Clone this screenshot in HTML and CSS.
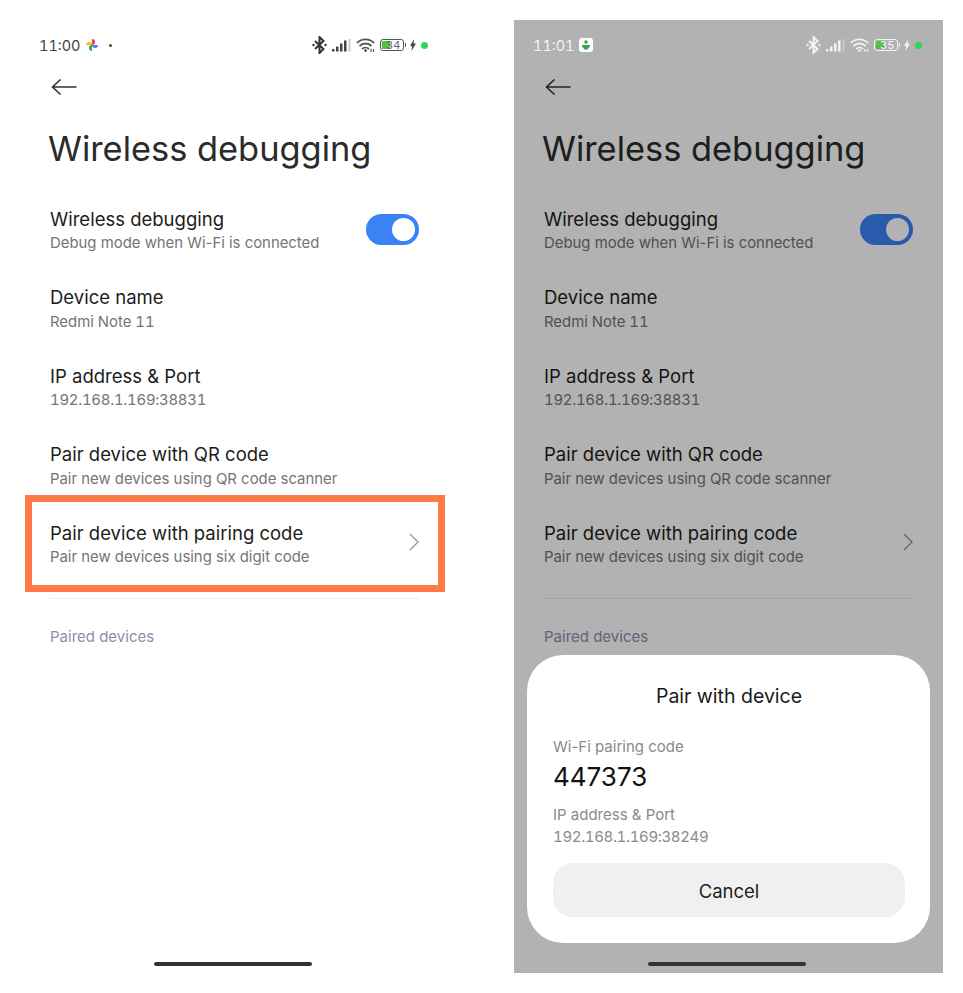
FILE: index.html
```html
<!DOCTYPE html>
<html lang="en">
<head>
  <meta charset="UTF-8">
  <meta name="viewport" content="width=device-width, initial-scale=1.0">
  <title>Wireless debugging</title>
  <link rel="stylesheet" href="styles.css">
</head>
<body>
  <div class="screens">

    <!-- left phone -->
    <div class="phone">
      <div class="status">
        <span class="time">11:00</span>
        <svg class="notif" width="14" height="14" viewBox="0 0 14 14">
          <path d="M7 7V1a3 3 0 0 1 0 6z" fill="#ea4335"/>
          <path d="M7 7h6a3 3 0 0 1-6 0z" fill="#4285f4"/>
          <path d="M7 7v6a3 3 0 0 1 0-6z" fill="#34a853"/>
          <path d="M7 7H1a3 3 0 0 1 6 0z" fill="#fbbc05"/>
        </svg>
        <span class="dot-small"></span>
        <div class="status-icons">
          <svg width="15" height="18" viewBox="0 0 15 18" fill="none" stroke="#333" stroke-width="2">
            <path d="M3 5l8.500 8-4 4V1l4 4-8.500 8"/>
            <circle cx="1.500" cy="9" r="1.200" fill="#333" stroke="none"/>
            <circle cx="13.500" cy="9" r="1.200" fill="#333" stroke="none"/>
          </svg>
          <svg width="19" height="14" viewBox="0 0 19 14" fill="#444">
            <rect x="0" y="11" width="2.500" height="2.500"/><rect x="4" y="8.500" width="2.500" height="5"/>
            <rect x="8" y="5.500" width="2.500" height="8"/><rect x="12" y="2.500" width="2.500" height="11"/>
            <rect x="16.500" y="1" width="2" height="12.500" fill="#ccc"/>
          </svg>
          <svg width="19" height="14" viewBox="0 0 19 14" fill="none" stroke="#555" stroke-width="1.800">
            <path d="M1 5a12 12 0 0 1 17 0M3.500 8a8.500 8.500 0 0 1 12 0"/>
            <path d="M6 11a5 5 0 0 1 7 0"/>
            <circle cx="9.500" cy="12.500" r="1.300" fill="#333" stroke="none"/>
            <path d="M15 11v3M17.500 11v3" stroke-width="1.200"/>
          </svg>
          <div class="battery">
            <span class="battery-fill"></span>
            <span class="battery-num">34</span>
          </div>
          <span class="battery-nub"></span>
          <svg width="6" height="12" viewBox="0 0 6 12" fill="#444"><path d="M4 0L0 7h2.200L1.500 12 6 4.500H3.600z"/></svg>
          <span class="dot-green"></span>
        </div>
      </div>

      <div class="back">
        <svg width="26" height="18" viewBox="0 0 26 18" fill="none" stroke="#333" stroke-width="1.600">
          <path d="M1.500 9H25.500M9.500 1.500L1.500 9l8 7.500"/>
        </svg>
      </div>
      <h1 class="page-title">Wireless debugging</h1>

      <div class="row">
        <div class="row-text">
          <div class="row-title">Wireless debugging</div>
          <div class="row-sub">Debug mode when Wi-Fi is connected</div>
        </div>
        <div class="toggle"><span class="knob"></span></div>
      </div>
      <div class="row">
        <div class="row-text">
          <div class="row-title">Device name</div>
          <div class="row-sub tnum">Redmi Note 11</div>
        </div>
      </div>
      <div class="row">
        <div class="row-text">
          <div class="row-title">IP address &amp; Port</div>
          <div class="row-sub tnum ip-num">192.168.1.169:38831</div>
        </div>
      </div>
      <div class="row">
        <div class="row-text">
          <div class="row-title">Pair device with QR code</div>
          <div class="row-sub">Pair new devices using QR code scanner</div>
        </div>
      </div>
      <div class="row">
        <div class="row-text">
          <div class="row-title">Pair device with pairing code</div>
          <div class="row-sub">Pair new devices using six digit code</div>
        </div>
        <svg class="chevron" width="10" height="18" viewBox="0 0 10 18" fill="none" stroke="#999" stroke-width="1.400">
          <path d="M1 1l8 8-8 8"/>
        </svg>
      </div>
      <div class="divider"></div>
      <div class="section-label">Paired devices</div>

      <div class="highlight"></div>
      <div class="home-bar"></div>
    </div>

    <!-- right phone -->
    <div class="phone">
      <div class="status status-light">
        <span class="time">11:01</span>
        <svg class="notif" width="14" height="14" viewBox="0 0 14 14">
          <rect width="14" height="14" rx="3" fill="#fff"/>
          <circle cx="7" cy="4" r="1.800" fill="#2fa84f"/>
          <path d="M3 7h8c0 2.500-2 4-4 5-2-1-4-2.500-4-5z" fill="#2fa84f"/>
        </svg>
        <div class="status-icons">
          <svg width="15" height="18" viewBox="0 0 15 18" fill="none" stroke="#f2f2f2" stroke-width="2">
            <path d="M3 5l8.500 8-4 4V1l4 4-8.500 8"/>
            <circle cx="1.500" cy="9" r="1.200" fill="#f2f2f2" stroke="none"/>
            <circle cx="13.500" cy="9" r="1.200" fill="#f2f2f2" stroke="none"/>
          </svg>
          <svg width="19" height="14" viewBox="0 0 19 14" fill="#f2f2f2">
            <rect x="0" y="11" width="2.500" height="2.500"/><rect x="4" y="8.500" width="2.500" height="5"/>
            <rect x="8" y="5.500" width="2.500" height="8"/><rect x="12" y="2.500" width="2.500" height="11"/>
            <rect x="16.500" y="1" width="2" height="12.500" fill="#c8c8c8"/>
          </svg>
          <svg width="19" height="14" viewBox="0 0 19 14" fill="none" stroke="#f2f2f2" stroke-width="1.800">
            <path d="M1 5a12 12 0 0 1 17 0M3.500 8a8.500 8.500 0 0 1 12 0"/>
            <path d="M6 11a5 5 0 0 1 7 0"/>
            <circle cx="9.500" cy="12.500" r="1.300" fill="#f2f2f2" stroke="none"/>
            <path d="M15 11v3M17.500 11v3" stroke-width="1.200"/>
          </svg>
          <div class="battery">
            <span class="battery-fill"></span>
            <span class="battery-num">35</span>
          </div>
          <span class="battery-nub"></span>
          <svg width="6" height="12" viewBox="0 0 6 12" fill="#f2f2f2"><path d="M4 0L0 7h2.200L1.500 12 6 4.500H3.600z"/></svg>
          <span class="dot-green"></span>
        </div>
      </div>

      <div class="dim"></div>

      <div class="back">
        <svg width="26" height="18" viewBox="0 0 26 18" fill="none" stroke="#333" stroke-width="1.600">
          <path d="M1.500 9H25.500M9.500 1.500L1.500 9l8 7.500"/>
        </svg>
      </div>
      <h1 class="page-title">Wireless debugging</h1>

      <div class="row">
        <div class="row-text">
          <div class="row-title">Wireless debugging</div>
          <div class="row-sub">Debug mode when Wi-Fi is connected</div>
        </div>
        <div class="toggle"><span class="knob"></span></div>
      </div>
      <div class="row">
        <div class="row-text">
          <div class="row-title">Device name</div>
          <div class="row-sub tnum">Redmi Note 11</div>
        </div>
      </div>
      <div class="row">
        <div class="row-text">
          <div class="row-title">IP address &amp; Port</div>
          <div class="row-sub tnum ip-num">192.168.1.169:38831</div>
        </div>
      </div>
      <div class="row">
        <div class="row-text">
          <div class="row-title">Pair device with QR code</div>
          <div class="row-sub">Pair new devices using QR code scanner</div>
        </div>
      </div>
      <div class="row">
        <div class="row-text">
          <div class="row-title">Pair device with pairing code</div>
          <div class="row-sub">Pair new devices using six digit code</div>
        </div>
        <svg class="chevron" width="10" height="18" viewBox="0 0 10 18" fill="none" stroke="#999" stroke-width="1.400">
          <path d="M1 1l8 8-8 8"/>
        </svg>
      </div>
      <div class="divider"></div>
      <div class="section-label">Paired devices</div>

      <div class="sheet">
        <div class="sheet-title">Pair with device</div>
        <div class="sheet-label">Wi-Fi pairing code</div>
        <div class="sheet-code">447373</div>
        <div class="sheet-label sheet-ip">IP address &amp; Port</div>
        <div class="sheet-label tnum sheet-num">192.168.1.169:38249</div>
        <button class="cancel">Cancel</button>
      </div>
      <div class="home-bar"></div>
    </div>

  </div>
</body>
</html>
```

FILE: styles.css
```css
body {
  margin: 0;
  background: #fff;
  font-family: Inter, "Noto Sans", sans-serif;
  color: #222;
}

.tnum {
  font-variant-numeric: tabular-nums;
}

.screens {
  display: flex;
  gap: 65px;
  padding: 20px;
}

.phone {
  position: relative;
  width: 429px;
  height: 953px;
  flex: none;
  overflow: hidden;
  padding: 0 30px;
  box-sizing: border-box;
  background: #fff;
}

.dim {
  position: absolute;
  inset: 0;
  background: rgba(0, 0, 0, 0.3);
  z-index: 2;
}

/* status bar */
.status {
  display: flex;
  align-items: center;
  height: 50px;
  margin: 0 -11px;
  font-size: 14.500px;
  font-variant-numeric: tabular-nums;
  color: #444;
}

.status-light {
  position: relative;
  z-index: 3;
  color: #f2f2f2;
}

.time {
  margin-right: 4px;
}

.notif {
  flex: none;
}

.dot-small {
  width: 3px;
  height: 3px;
  margin-left: 10px;
  border-radius: 50%;
  background: #444;
}

.status-icons {
  display: flex;
  align-items: center;
  gap: 5px;
  margin-left: auto;
  margin-right: 2px;
}

.battery {
  position: relative;
  display: flex;
  align-items: center;
  width: 22px;
  height: 10px;
  border: 1px solid #555;
  border-radius: 3px;
  overflow: hidden;
}

.status-light .battery {
  border-color: #f2f2f2;
}

.battery-fill {
  width: 8px;
  height: 8px;
  margin-left: 1px;
  background: #4fc43c;
}

.battery-num {
  position: absolute;
  left: 5px;
  top: -2px;
  font-size: 11px;
  line-height: 14px;
  color: #666;
}

.status-light .battery-num {
  color: #f2f2f2;
}

.battery-nub {
  width: 1px;
  height: 4px;
  margin-left: -4px;
  margin-right: -1px;
  background: #555;
}

.status-light .battery-nub {
  background: #f2f2f2;
}

.dot-green {
  width: 7px;
  height: 7px;
  border-radius: 50%;
  background: #2bd463;
}

/* page header */
.back {
  display: flex;
  margin-left: 1px;
  height: 34px;
  align-items: center;
}

.page-title {
  margin: 23px 0 27.500px -2px;
  font-size: 34.400px;
  line-height: 44px;
  font-weight: 400;
  color: #2b2b2b;
}

/* rows */
.row {
  display: flex;
  align-items: center;
  justify-content: space-between;
  height: 78.400px;
  box-sizing: border-box;
  padding-bottom: 15px;
}

.row-title {
  font-size: 18.500px;
  line-height: 24px;
  color: #1c1c1c;
}

.row-sub {
  margin-top: 2.500px;
  font-size: 14.900px;
  line-height: 20px;
  color: #757575;
}

.ip-num {
  letter-spacing: -0.250px;
}

.toggle {
  display: flex;
  align-items: center;
  justify-content: flex-end;
  width: 53px;
  height: 31px;
  margin-bottom: 2px;
  padding-right: 4px;
  box-sizing: border-box;
  border-radius: 16px;
  background: #3b82f6;
}

.knob {
  width: 23px;
  height: 23px;
  border-radius: 50%;
  background: #fff;
}

.chevron {
  margin-bottom: 3px;
}

.divider {
  height: 1px;
  margin-top: 8px;
  background: #eceef6;
}

.section-label {
  margin-top: 28px;
  font-size: 15px;
  line-height: 20px;
  color: #8b8fa8;
}

/* orange box on the left phone */
.highlight {
  position: absolute;
  left: 5px;
  top: 475px;
  width: 420px;
  height: 97px;
  box-sizing: border-box;
  border: 7.500px solid #ff7b46;
}

.home-bar {
  position: absolute;
  left: 134px;
  bottom: 7px;
  width: 158px;
  height: 4px;
  border-radius: 2px;
  background: #333;
  z-index: 4;
}

/* bottom sheet on the right phone */
.sheet {
  position: absolute;
  left: 13px;
  right: 13px;
  bottom: 30px;
  height: 288px;
  box-sizing: border-box;
  padding: 28px 25px 26px 26px;
  display: flex;
  flex-direction: column;
  border-radius: 36px;
  background: #fff;
  z-index: 3;
}

.sheet-title {
  font-size: 19.500px;
  line-height: 26px;
  text-align: center;
  color: #1a1a1a;
  margin-bottom: 27px;
}

.sheet-label {
  font-size: 15px;
  line-height: 22px;
  color: #8a8a8a;
}

.sheet-num {
  letter-spacing: -0.350px;
}

.sheet-code {
  margin-top: 2px;
  font-size: 26px;
  line-height: 34px;
  color: #111;
}

.sheet-ip {
  margin-top: 10px;
}

.cancel {
  margin-top: auto;
  height: 54px;
  padding-top: 2px;
  border: none;
  border-radius: 20px;
  background: #f0f0f0;
  color: #222;
  font-family: inherit;
  font-size: 18.500px;
}
```
